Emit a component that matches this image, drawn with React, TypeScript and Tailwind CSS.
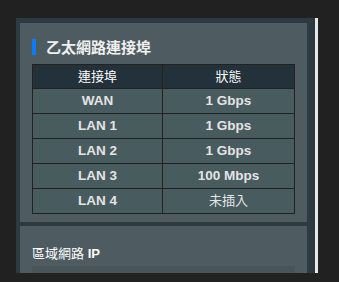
import React from "react";

const rows = [
  ["WAN", "1 Gbps"],
  ["LAN 1", "1 Gbps"],
  ["LAN 2", "1 Gbps"],
  ["LAN 3", "100 Mbps"],
  ["LAN 4", "未插入"],
];

const font = { fontFamily: '"Liberation Sans", "Noto Sans CJK TC", sans-serif' };

export default function App() {
  return (
    <div className="w-[339px] h-[282px] bg-[#212121] overflow-hidden" style={font}>
      <div className="flex pt-[18px] pl-[16px]">
        <div className="w-[299px] h-[255px] bg-[#2c3b41] pl-[4px] pt-[5px] flex flex-col gap-[4px] overflow-hidden">
          <div className="shrink-0 w-[287px] h-[199px] bg-[#4e5c61] px-[12px] pt-[16px] flex flex-col">
            <div className="flex items-center h-[16px] gap-[10px]">
              <div className="w-[4px] h-[16px] bg-[#0a7cf5]" />
              <div className="text-[15px] font-bold text-[#f0f0f0] leading-none">乙太網路連接埠</div>
            </div>
            <div className="mt-[9px] w-[263px] border border-[#222]">
              <div className="grid grid-cols-[130px_1fr] h-[23px] bg-[#22313a] text-[13px] text-white">
                <div className="flex items-center justify-center border-r border-[#222]">連接埠</div>
                <div className="flex items-center justify-center">狀態</div>
              </div>
              {rows.map(([a, b]) => (
                <div key={a} className="grid grid-cols-[130px_1fr] h-[25px] bg-[#485b5f] border-t border-[#222] text-[13.5px] text-[#e4e4e4]">
                  <div className="flex items-center justify-center border-r border-[#222] font-bold">{a}</div>
                  <div className={b === "未插入" ? "flex items-center justify-center font-normal text-[13px]" : "flex items-center justify-center font-bold"}>{b}</div>
                </div>
              ))}
            </div>
          </div>
          <div className="shrink-0 w-[287px] h-[60px] bg-[#4e5c61] px-[12px] pt-[20px]">
            <div className="text-[13px] text-white leading-[16px]">區域網路 <span className="font-bold">IP</span></div>
            <div className="mt-[4px] h-[20px] bg-[#46555a]" />
          </div>
        </div>
        <div className="w-[3px] h-[255px] bg-[#e8e8e8]" />
      </div>
    </div>
  );
}
